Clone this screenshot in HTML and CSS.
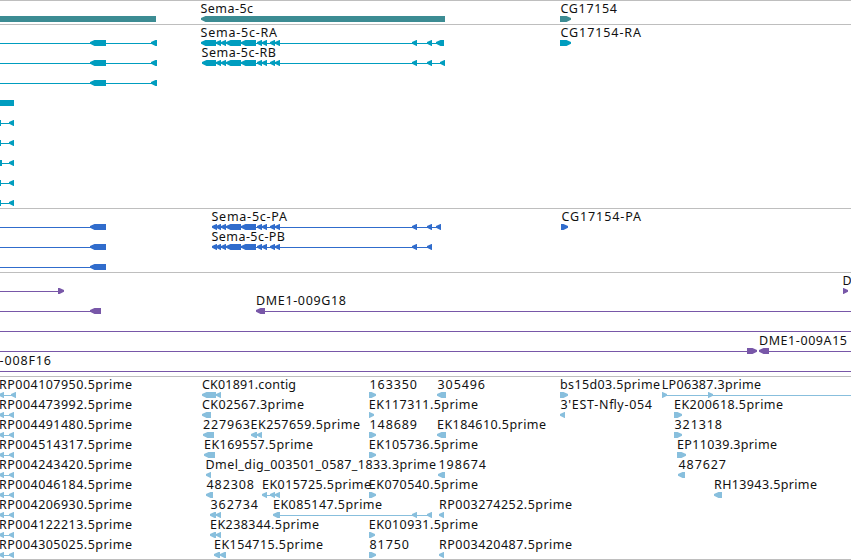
FILE: index.html
```
<!DOCTYPE html>
<html lang="en">
<head>
<meta charset="UTF-8" />
<meta name="viewport" content="width=device-width, initial-scale=1.0"/>
<title>Genome Browser</title>
<link rel="stylesheet" href="styles.css">
</head>
<body>

<div class="browser">
  <div class="track gene" data-track="gene" data-rows="1"></div>
  <div class="track mrna" data-track="mrna" data-rows="9"></div>
  <div class="track cds" data-track="cds" data-rows="3"></div>
  <div class="track bac" data-track="bac" data-rows="5"></div>
  <div class="track est" data-track="est" data-rows="9"></div>
</div>

<script src="script.js"></script>
</body>
</html>
```

FILE: styles.css
```
body {
  margin: 0;
  background-color: #fff;
  overflow: hidden;
}
.browser {
  width: 851px;
  height: 559px;
  display: flex;
  flex-direction: column;
  border-bottom: 1px solid #bebebe;
}
.track {
  border-top: 1px solid #bebebe;
  overflow: hidden;
}
.gene {
  height: 23px;
  color: #3c8c93;
}
.mrna {
  height: 183px;
  color: #009dbf;
}
.cds {
  height: 63px;
  color: #306ccc;
}
.bac {
  height: 103px;
  color: #7857a8;
}
.est {
  height: 182px;
  color: #88bfdd;
}
.track svg {
  display: block;
}
.feature,
.intron {
  fill: currentColor;
}
.intron {
  shape-rendering: crispEdges;
}
.label {
  font-family: "Noto Sans", "Open Sans", sans-serif;
  font-size: 12.5px;
  fill: #111;
}
```

FILE: script.js
```
const NS = 'http://www.w3.org/2000/svg';
const ROW = 20;

// exons shared by the Sema-5c transcripts
const semaExons = [[226, 241], [241, 256], [257, 262], [262, 267], [270, 275], [275, 280], [412, 417], [427, 432]];

// row, label, label x, label end, strand ('<', '>' or '' for a plain box), exons, optional intron line
const tracks = {
  gene: [
    [0, '', 0, 0, '', [[0, 156]]],
    [0, 'Sema-5c', 200.5, 253, '<', [[201, 445]]],
    [0, 'CG17154', 560.5, 617, '>', [[560, 571]]]
  ],
  mrna: [
    [0, '', 0, 0, '<', [[90, 106], [151, 157]], [0, 156]],
    [1, '', 0, 0, '<', [[90, 106], [151, 157]], [0, 156]],
    [2, '', 0, 0, '<', [[90, 106], [151, 157]], [0, 156]],
    [3, '', 0, 0, '', [[0, 14]]],
    [0, 'Sema-5c-RA', 200.5, 277, '<', [[201, 216], [216, 221], [221, 226], ...semaExons, [436, 444]], [216, 440]],
    [1, 'Sema-5c-RB', 201.5, 276, '<', [[202, 216], [216, 221], [221, 226], ...semaExons, [440, 445]], [216, 442]],
    [0, 'CG17154-RA', 560.5, 641, '>', [[560, 571]]]
  ],
  cds: [
    [0, '', 0, 0, '<', [[90, 106]], [0, 95]],
    [1, '', 0, 0, '<', [[90, 106]], [0, 95]],
    [2, '', 0, 0, '<', [[90, 106]], [0, 95]],
    [0, 'Sema-5c-PA', 211.5, 287, '<', [[212, 217], [216, 221], [221, 226], ...semaExons, [436, 441]], [216, 438]],
    [1, 'Sema-5c-PB', 211.5, 285, '<', [[212, 217], [216, 221], [221, 226], ...semaExons], [216, 430]],
    [0, 'CG17154-PA', 561.5, 641, '>', [[561, 568]]]
  ],
  bac: [
    [0, '', 0, 0, '>', [[58, 64]], [0, 60]],
    [0, 'D', 842.5, 0, '>', [[843, 848]]],
    [1, '', 0, 0, '<', [[90, 101]], [0, 95]],
    [1, 'DME1-009G18', 256, 346, '<', [[256, 265]], [262, 851]],
    [2, '', 0, 0, '', [], [0, 851]],
    [3, '', 0, 0, '>', [[747, 757]], [0, 750]],
    [3, 'DME1-009A15', 759, 847, '<', [[759, 769]], [765, 851]],
    [4, '-008F16', -0.5, 51, '', [], [0, 851]]
  ],
  est: [
    [0, 'CK01891.contig', 202, 296, '<', [[202, 216], [216, 221]]],
    [1, 'CK02567.3prime', 202, 304, '<', [[202, 211]]],
    [2, '227963', 203, 250, '<', [[203, 214]]],
    [2, 'EK257659.5prime', 250.5, 360, '<', [[251, 257], [257, 262]]],
    [3, 'EK169557.5prime', 204, 313, '<', [[204, 215]]],
    [4, 'Dmel_dig_003501_0587_1833.3prime', 205.5, 436, '<', [[206, 211]]],
    [5, '482308', 206.5, 254, '<', [[206, 213]]],
    [5, 'EK015725.5prime', 262, 371, '<', [[262, 267], [270, 275], [275, 280]], [266, 272]],
    [6, '362734', 210.5, 258, '<', [[210, 216], [216, 221]]],
    [6, 'EK085147.5prime', 273, 382, '<', [[273, 280], [412, 417], [427, 432]], [278, 430]],
    [7, 'EK238344.5prime', 210, 319, '<', [[210, 216], [216, 221]]],
    [8, 'EK154715.5prime', 214, 323, '<', [[214, 220], [220, 226]]],
    [0, '163350', 369.5, 417, '>', [[369, 376]]],
    [1, 'EK117311.5prime', 368.8, 478, '>', [[369, 374]]],
    [2, '148689', 369.5, 417, '>', [[369, 376]]],
    [3, 'EK105736.5prime', 368.8, 478, '>', [[369, 376]]],
    [5, 'EK070540.5prime', 368.8, 478, '>', [[369, 376]]],
    [7, 'EK010931.5prime', 368.8, 478, '>', [[369, 375]]],
    [8, '81750', 369.5, 409, '>', [[369, 376]]],
    [0, '305496', 437.5, 485, '<', [[437, 446]]],
    [2, 'EK184610.5prime', 437, 546, '<', [[437, 446]]],
    [4, '198674', 438.5, 486, '<', [[438, 445]]],
    [6, 'RP003274252.5prime', 439, 572, '<', [[439, 444]]],
    [8, 'RP003420487.5prime', 439, 572, '<', [[439, 444]]],
    [0, 'bs15d03.5prime', 560, 660, '>', [[560, 568]]],
    [1, "3'EST-Nfly-054", 560.5, 652, '<', [[560, 565]]],
    [0, 'LP06387.3prime', 661.7, 761, '>', [[662, 667], [708, 713]], [664, 851]],
    [1, 'EK200618.5prime', 674, 783, '>', [[674, 682]]],
    [2, '321318', 674.5, 722, '>', [[674, 682]]],
    [3, 'EP11039.3prime', 677, 777, '>', [[677, 686]]],
    [4, '487627', 678.5, 726, '<', [[678, 685]]],
    [5, 'RH13943.5prime', 714, 817, '<', [[714, 722]]]
  ]
};

// short transcripts at the left edge
for (let row = 4; row < 9; row++) {
  tracks.mrna.push([row, '', 0, 0, '', [[0, row === 6 ? 2 : 1]]]);
  tracks.mrna.push([row, '', 0, 0, '<', [[9, 14]], [0, 12]]);
}

// ESTs cut off by the left edge
['RP004107950', 'RP004473992', 'RP004491480', 'RP004514317', 'RP004243420',
  'RP004046184', 'RP004206930', 'RP004122213', 'RP004305025'].forEach((name, row) => {
  const end = row === 0 ? 16 : 14;
  tracks.est.push([row, name + '.5prime', -1, 132, '<', [[-1, 4], [end - 5, end]], [2, end - 2]]);
});

function add(svg, tag, attrs) {
  const el = document.createElementNS(NS, tag);
  for (const key in attrs) {
    el.setAttribute(key, attrs[key]);
  }
  svg.appendChild(el);
  return el;
}

// arrow shape, the head is 5px long with a blunt tip
function glyphPoints(x1, x2, y, strand) {
  if (strand === '<') {
    return `${x1},${y + 2} ${x1 + 4.5},${y} ${x2},${y} ${x2},${y + 6} ${x1 + 4.5},${y + 6} ${x1},${y + 3.8}`;
  }
  if (strand === '>') {
    return `${x1},${y} ${x2 - 4.5},${y} ${x2},${y + 2} ${x2},${y + 3.8} ${x2 - 4.5},${y + 6} ${x1},${y + 6}`;
  }
  return `${x1},${y} ${x2},${y} ${x2},${y + 6} ${x1},${y + 6}`;
}

document.querySelectorAll('.track').forEach(track => {
  const svg = document.createElementNS(NS, 'svg');
  svg.setAttribute('width', 851);
  svg.setAttribute('height', track.dataset.rows * ROW + 3);
  track.appendChild(svg);

  tracks[track.dataset.track].forEach(([row, name, x, end, strand, exons, intron]) => {
    const top = row * ROW;
    if (intron) {
      add(svg, 'rect', { class: 'intron', x: intron[0], y: top + 18, width: intron[1] - intron[0], height: 1 });
    }
    exons.forEach(([x1, x2]) => {
      add(svg, 'polygon', { class: 'feature', points: glyphPoints(x1, x2, top + 15, strand) });
    });
    if (name) {
      const label = add(svg, 'text', { class: 'label', x: x, y: top + 12 });
      if (end) {
        label.setAttribute('textLength', end - x);
      }
      label.textContent = name;
    }
  });
});
```
